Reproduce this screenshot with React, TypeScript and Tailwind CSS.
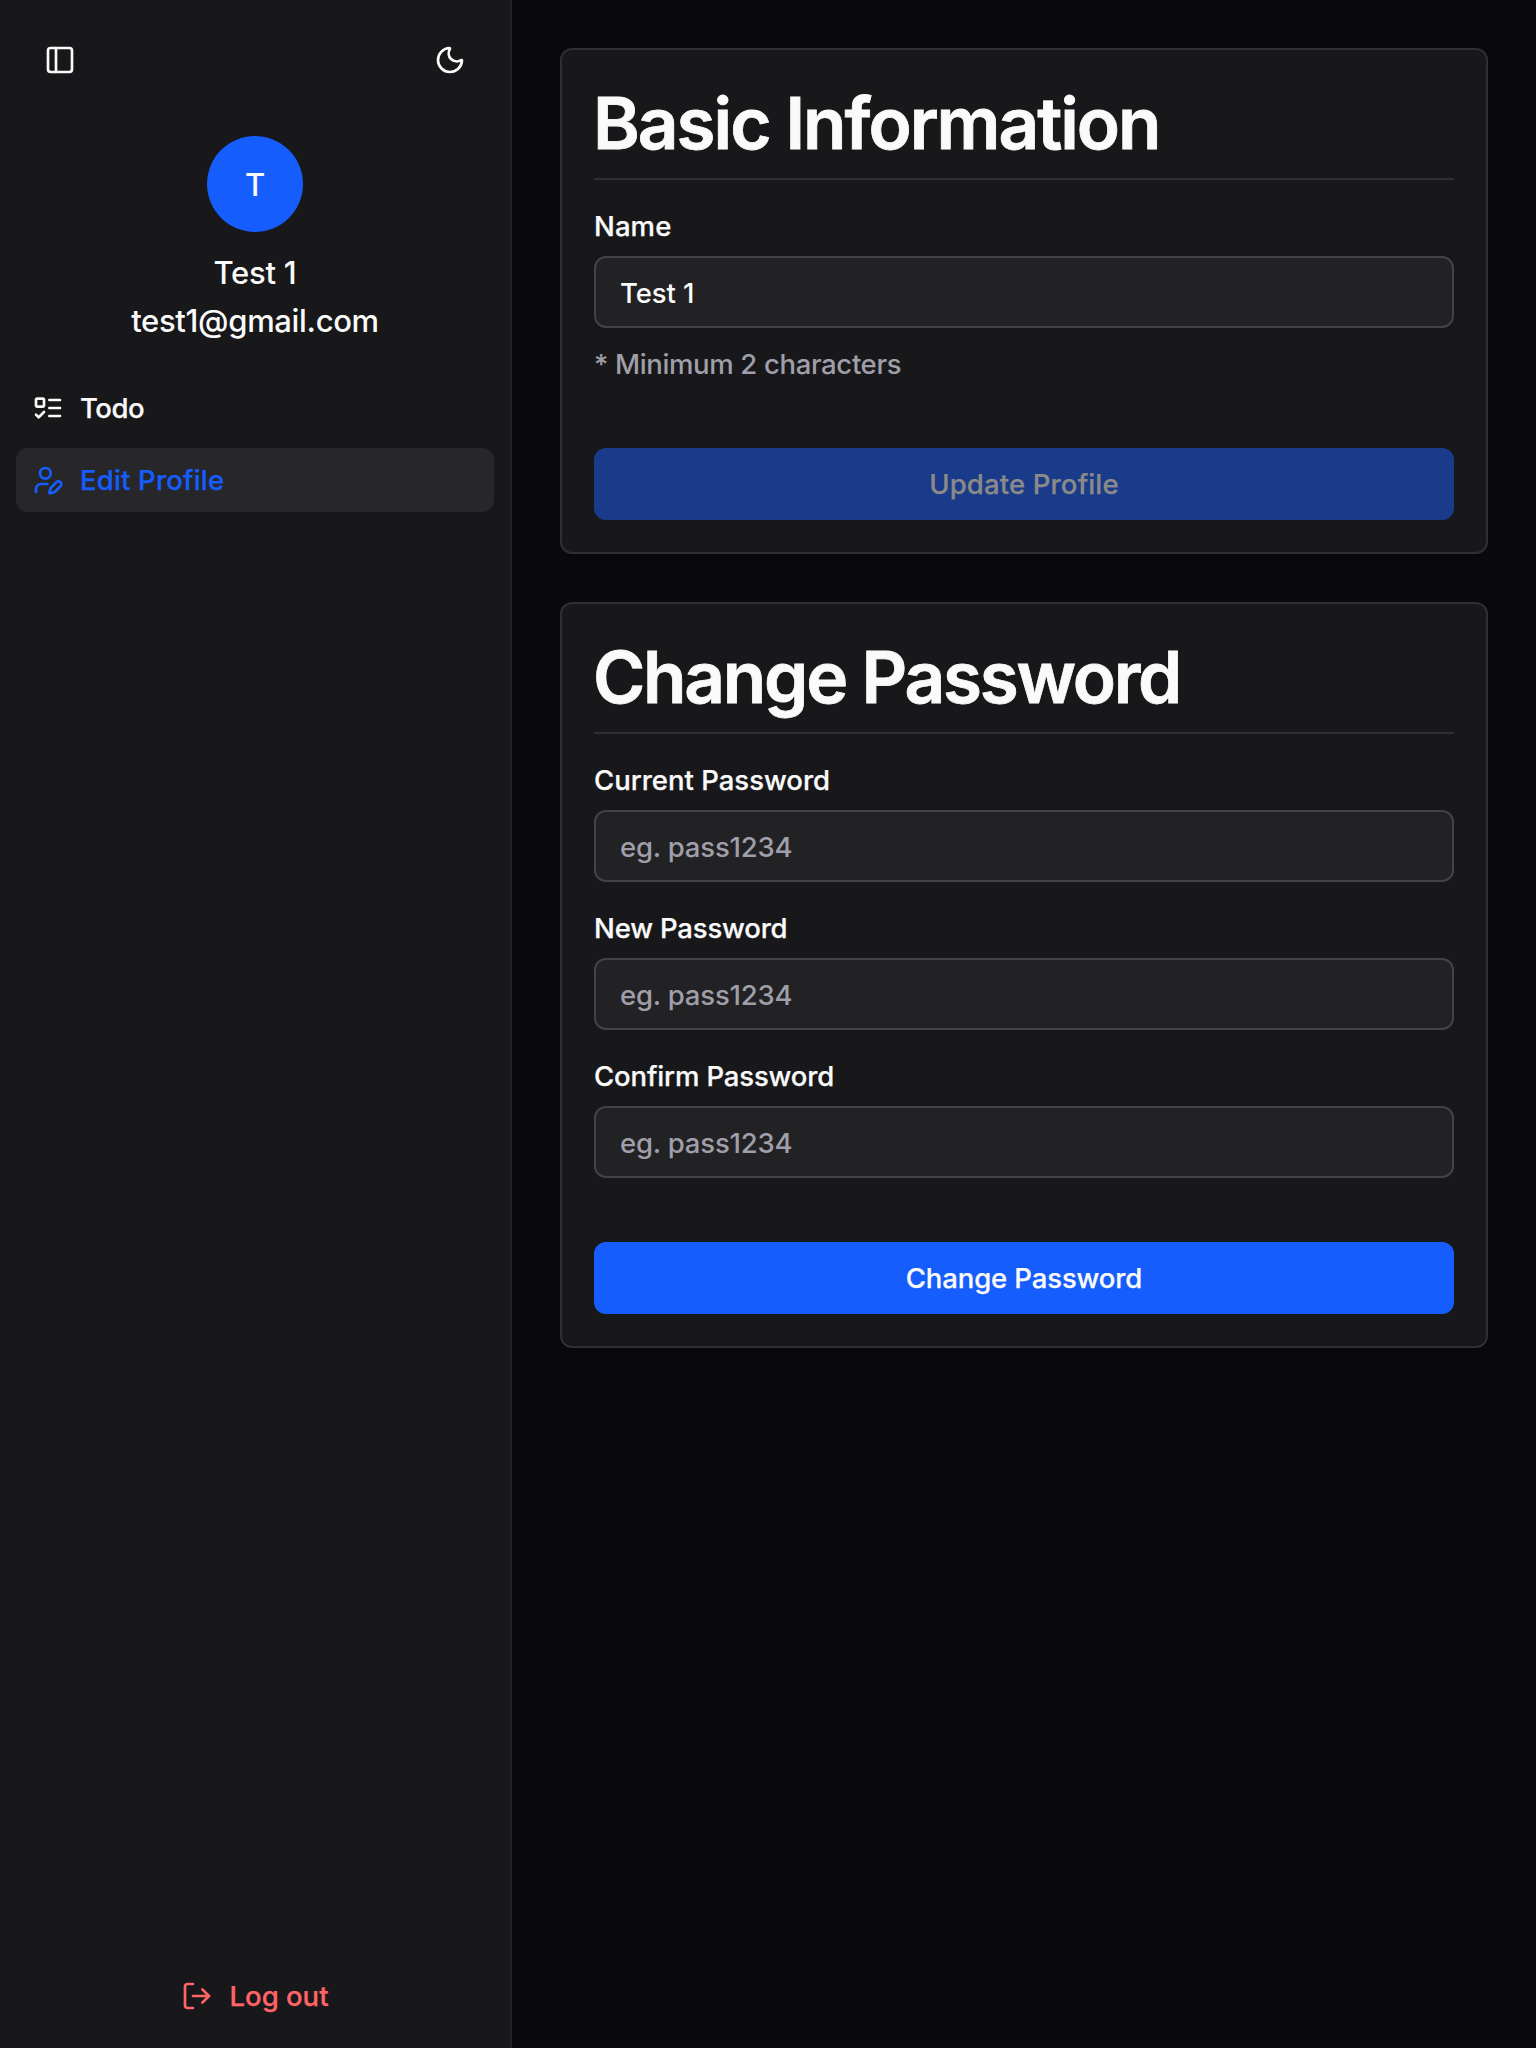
import type { ReactNode } from "react";

type IconProps = { className?: string; children: ReactNode };

function Icon({ className = "", children }: IconProps) {
  return (
    <svg
      viewBox="0 0 24 24"
      fill="none"
      stroke="currentColor"
      strokeWidth={2}
      strokeLinecap="round"
      strokeLinejoin="round"
      className={`size-8 shrink-0 ${className}`}
    >
      {children}
    </svg>
  );
}

function Sidebar() {
  return (
    <aside className="flex w-[512px] shrink-0 flex-col border-r-2 border-[#242427] bg-[#18181b]">
      <div className="flex items-center justify-between px-11 pt-11">
        <button type="button" aria-label="Toggle sidebar">
          <Icon>
            <rect width="18" height="18" x="3" y="3" rx="2" />
            <path d="M9 3v18" />
          </Icon>
        </button>
        <button type="button" aria-label="Toggle theme">
          <Icon>
            <path d="M20.985 12.486a9 9 0 1 1-9.473-9.472c.405-.022.617.46.402.803a6 6 0 0 0 8.268 8.268c.344-.215.825-.004.803.401" />
          </Icon>
        </button>
      </div>

      <div className="mt-15 flex flex-col items-center text-[31px] leading-12 font-medium">
        <div className="mb-[17px] flex size-24 items-center justify-center rounded-full bg-[#155dfc] pt-0.5">T</div>
        <p className="tracking-[-0.25px]">Test 1</p>
        <p className="tracking-[-0.33px]">test1@gmail.com</p>
      </div>

      <nav className="mt-[31px] flex flex-col gap-2 px-4 text-[27.5px] font-medium [-webkit-text-stroke:0.25px]">
        <a className="flex h-16 items-center gap-4 rounded-xl px-4">
          <Icon>
            <rect x="3" y="5" width="6" height="6" rx="1" />
            <path d="m3 17 2 2 4-4" />
            <path d="M13 6h8" />
            <path d="M13 12h8" />
            <path d="M13 18h8" />
          </Icon>
          <span className="pt-0.5 tracking-[-0.45px]">Todo</span>
        </a>
        <a className="flex h-16 items-center gap-4 rounded-xl bg-[#27272a] px-4 text-[#155dfc]">
          <Icon>
            <path d="M11.5 15H7a4 4 0 0 0-4 4v2" />
            <path d="M21.378 16.626a1 1 0 0 0-3.004-3.004l-4.01 4.012a2 2 0 0 0-.506.854l-.837 2.87a.5.5 0 0 0 .62.62l2.87-.837a2 2 0 0 0 .854-.506z" />
            <circle cx="10" cy="7" r="4" />
          </Icon>
          <span className="pt-0.5 tracking-[0.18px]">Edit Profile</span>
        </a>
      </nav>

      <button
        type="button"
        className="mt-auto mb-5 flex h-16 items-center justify-center gap-4 text-[27.5px] font-medium text-[#ff6467] [-webkit-text-stroke:0.25px]"
      >
        <Icon>
          <path d="m16 17 5-5-5-5" />
          <path d="M21 12H9" />
          <path d="M9 21H5a2 2 0 0 1-2-2V5a2 2 0 0 1 2-2h4" />
        </Icon>
        <span className="pt-0.5">Log out</span>
      </button>
    </aside>
  );
}

function Card({ title, children }: { title: ReactNode; children: ReactNode }) {
  return (
    <section className="rounded-xl border-2 border-[#2f2f32] bg-[#18181b] p-8">
      <div className="border-b-2 border-[#2f2f32] pb-[14px]">{title}</div>
      <form className="mt-8">{children}</form>
    </section>
  );
}

const heading = "-ml-px text-[71px] leading-[82px] font-semibold [-webkit-text-stroke:0.8px]";

function Field({
  label,
  value,
  placeholder,
  hint,
}: {
  label: ReactNode;
  value?: string;
  placeholder?: string;
  hint?: string;
}) {
  return (
    <label className="flex flex-col">
      <span className="text-[27.5px] leading-7 font-medium [-webkit-text-stroke:0.25px]">{label}</span>
      <input
        className="mt-4 h-18 w-full rounded-xl border-2 border-[#434346] bg-[#222224] px-6 pt-0.5 text-[27.5px] font-medium tracking-[-0.1px] outline-none placeholder:tracking-[-0.2px] placeholder:text-[#9f9fa9] placeholder:opacity-100"
        defaultValue={value}
        placeholder={placeholder}
      />
      {hint && (
        <span className="mt-4 text-[27.5px] leading-10 font-medium tracking-[-0.35px] text-[#9f9fa9]">{hint}</span>
      )}
    </label>
  );
}

export default function App() {
  return (
    <div className="flex h-[2048px] w-[1536px] overflow-hidden bg-[#09090b] font-['Inter',sans-serif] text-[#fafafa]">
      <Sidebar />
      <main className="flex flex-1 flex-col gap-12 p-12">
        <Card title={<h1 className={`${heading} tracking-[-2px]`}>Basic Information</h1>}>
          <Field label={<span className="tracking-[0.1px]">Name</span>} value="Test 1" hint="* Minimum 2 characters" />
          <button
            type="button"
            disabled
            className="mt-16 h-18 w-full rounded-xl bg-[#1a3a8a] pt-0.5 text-[27.5px] font-medium tracking-[0.15px] text-[#8a8a89] [-webkit-text-stroke:0.25px]"
          >
            Update Profile
          </button>
        </Card>

        <Card title={<h1 className={`${heading} tracking-[-2.25px]`}>Change Password</h1>}>
          <div className="flex flex-col gap-8">
            <Field label="Current Password" placeholder="eg. pass1234" />
            <Field label={<span className="tracking-[-0.17px]">New Password</span>} placeholder="eg. pass1234" />
            <Field label={<span className="tracking-[-0.14px]">Confirm Password</span>} placeholder="eg. pass1234" />
          </div>
          <button
            type="button"
            className="mt-16 h-18 w-full rounded-xl bg-[#155dfc] pt-0.5 text-[27.5px] font-medium tracking-[-0.12px] [-webkit-text-stroke:0.25px]"
          >
            Change Password
          </button>
        </Card>
      </main>
    </div>
  );
}
